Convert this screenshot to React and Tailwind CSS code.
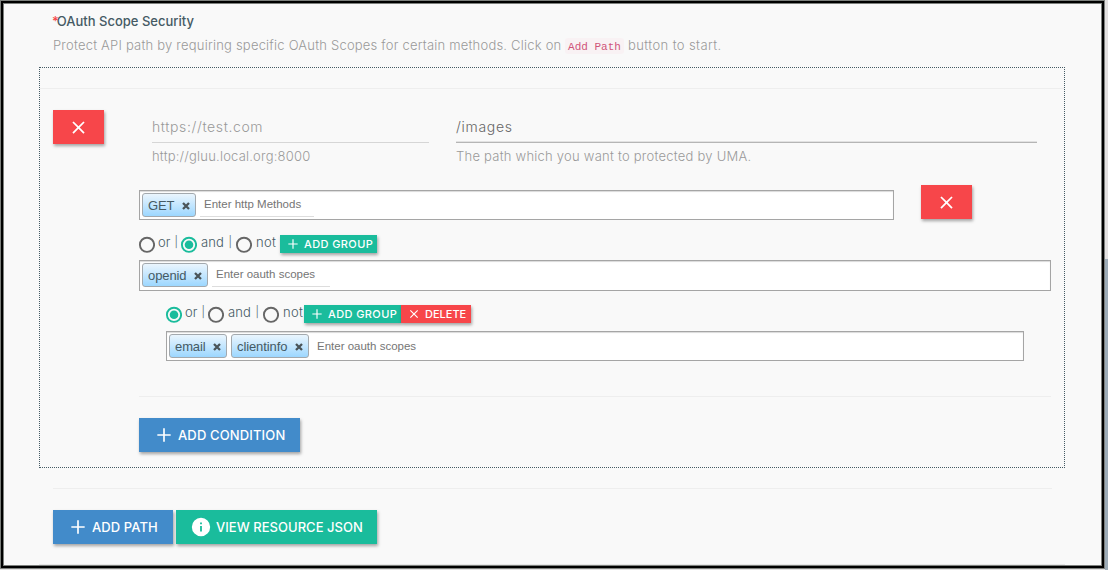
import React from "react";

const sans = "font-[Inter,'Liberation_Sans',sans-serif]";
const shadow = "shadow-[1px_2px_3px_rgba(0,0,0,0.35)]";

function Plus({ size = 20, className = "" }) {
  return (
    <svg width={size} height={size} viewBox="0 0 24 24" className={`shrink-0 ${className}`} fill="currentColor">
      <path d="M20 13h-7v7h-2v-7H4v-2h7V4h2v7h7z" />
    </svg>
  );
}

function Cross({ size = 20, className = "" }) {
  return (
    <svg width={size} height={size} viewBox="0 0 24 24" className={`shrink-0 ${className}`} fill="currentColor">
      <path d="M19 6.41 17.59 5 12 10.59 6.41 5 5 6.41 10.59 12 5 17.59 6.41 19 12 13.41 17.59 19 19 17.59 13.41 12z" />
    </svg>
  );
}

function Info() {
  return (
    <svg width="22" height="22" viewBox="0 0 24 24" className="-mt-px shrink-0" fill="currentColor">
      <path d="M12 2a10 10 0 1 0 0 20 10 10 0 0 0 0-20zm1 15h-2v-6h2v6zm0-8h-2V7h2v2z" />
    </svg>
  );
}

function RemoveButton() {
  return (
    <button className={`flex h-[34px] w-[51px] shrink-0 items-center justify-center bg-[#f7464a] text-white ${shadow}`}>
      <Cross size={21} />
    </button>
  );
}

function Tag({ label, width }) {
  return (
    <span
      className={`mr-1 flex h-6 shrink-0 items-center justify-between rounded-[3px] border border-[#a3a9ae] bg-linear-to-b from-[#eaf5fd] to-[#9cd7ff] pr-[5px] pl-[5px] font-['Liberation_Sans',sans-serif] text-[13px] leading-none tracking-[-0.1px] text-[#455a64] ${width}`}
    >
      {label}
      <svg width="8" height="8" viewBox="0 0 8 8" className="mt-[2px]" stroke="#4a5459" strokeWidth="2.3">
        <path d="M1 1l6 6M7 1l-6 6" />
      </svg>
    </span>
  );
}

function TagField({ tags, placeholder, className, inputClass }) {
  return (
    <div className={`flex items-start border border-[#a5a5a5] bg-white pt-[2px] pl-[2px] shadow-[inset_0_1px_1px_rgba(0,0,0,0.15)] ${className}`}>
      {tags.map((t) => (
        <Tag key={t.label} {...t} />
      ))}
      <span className={`flex h-6 items-center pt-px pl-[4px] font-['Liberation_Sans',sans-serif] text-[11.5px] text-[#757575] ${inputClass}`}>
        {placeholder}
      </span>
    </div>
  );
}

function Radio({ checked }) {
  return (
    <svg width="17" height="17" viewBox="0 0 17 17" className="mt-px -ml-px mr-px shrink-0">
      <circle cx="9" cy="8.8" r="7.1" fill="none" strokeWidth="1.9" stroke={checked ? "#1abc9c" : "#666"} />
      {checked && <circle cx="9" cy="8.8" r="4.3" fill="#1abc9c" />}
    </svg>
  );
}

function Operators({ selected, children, className }) {
  return (
    <div className={`flex h-[18px] items-start text-[13px] leading-[15px] font-[350] text-[#455a64] ${className}`}>
      <Radio checked={selected === "or"} />
      <span className="flex w-[25px] shrink-0 justify-between pr-[3px] pl-[2px]">
        or <span className="text-[11px]">|</span>
      </span>
      <Radio checked={selected === "and"} />
      <span className="flex w-[38px] shrink-0 justify-between pr-[4px] pl-[3px] tracking-[0.1px]">
        and <span className="text-[11px]">|</span>
      </span>
      <Radio checked={selected === "not"} />
      <span className="w-[27px] shrink-0 pl-[3px] tracking-[0.3px]">not</span>
      {children}
    </div>
  );
}

function SmallButton({ icon, label, className }) {
  return (
    <button className={`flex h-[18px] shrink-0 items-center pl-[6px] text-[11px] font-medium text-white ${shadow} ${className}`}>
      {icon}
      {label}
    </button>
  );
}

export default function App() {
  return (
    <div className={`flex h-[570px] w-[1108px] overflow-hidden bg-[#e3e1e1] ${sans}`}>
      <div className="h-[569px] w-[1105px] shrink-0 border border-[#7d807d]">
        <div className="flex h-[567px] w-[1103px] flex-col border-2 border-black bg-[#f9f9f9] pl-9 shadow-[inset_0_0_0_1px_#7d807d]">
          <h1 className="mt-[9px] ml-[12px] h-[18px] text-[13px] leading-[18px] font-medium text-[#455a64]">
            <span className="-mr-[2px] ml-px text-[#f7464a]">*</span>OAuth Scope Security
          </h1>
          <p className="mt-[6px] ml-[14px] flex h-[18px] items-center pt-[2px] text-[13px] font-light whitespace-pre text-[#999]">
            <span className="w-[512px] shrink-0 tracking-[0.21px]">
              Protect API path by requiring specific OAuth Scopes for certain methods. Click on{" "}
            </span>
            <code className="mr-[4px] flex h-4 w-[59px] shrink-0 items-center justify-center rounded-[3px] bg-[#f9f2f4] pt-[2px] font-['Liberation_Mono',monospace] text-[11px] text-[#d0547a]">
              Add Path
            </code>
            <span className="tracking-[0.4px]">button to start.</span>
          </p>

          <section className="mt-[13px] h-[401px] w-[1026px] shrink-0 border border-dotted border-[#455a64]">
            <div className="mt-5 h-px bg-[#eee]" />
            <div className="mt-[21px] ml-[13px] flex items-start">
              <RemoveButton />
              <div className="ml-12 h-[57px] w-[277px] text-[13px] font-light text-[#999]">
                <div className="flex h-[33px] items-center border-b border-[#d6d6d6] text-[14px] tracking-[0.6px]">https://test.com</div>
                <div className="pt-[4px] tracking-[0.2px]">http://gluu.local.org:8000</div>
              </div>
              <div className="ml-[27px] h-[57px] w-[581px] text-[13px] font-light text-[#999]">
                <div className="flex h-[33px] items-center border-b border-[#b5b5b5] text-[14px] font-[350] tracking-[0.7px] text-[#666] shadow-[inset_0_-1px_0_#e2e2e2]">
                  /images
                </div>
                <div className="pt-[4px] tracking-[0.24px]">The path which you want to protected by UMA.</div>
              </div>
            </div>

            <div className="mt-[18px] ml-[99px] flex items-start">
              <TagField
                className="mt-[5px] h-[30px] w-[755px]"
                tags={[{ label: "GET", width: "w-[54px]" }]}
                placeholder="Enter http Methods"
                inputClass="w-[114px] border-b border-[#ddd]"
              />
              <div className="ml-[27px]">
                <RemoveButton />
              </div>
            </div>

            <Operators selected="and" className="mt-[15px] ml-[99px]">
              <SmallButton className="w-[97px] bg-[#1abc9c] tracking-[0.4px]" icon={<Plus size={14} className="mr-1" />} label="ADD GROUP" />
            </Operators>
            <TagField
              className="mt-[7px] ml-[99px] h-[31px] w-[912px]"
              tags={[{ label: "openid", width: "w-[66px]" }]}
              placeholder="Enter oauth scopes"
              inputClass="w-[118px] border-b border-[#ddd]"
            />

            <Operators selected="or" className="mt-[14px] ml-[126px]">
              <SmallButton className="-ml-[3px] w-[97px] bg-[#1abc9c] tracking-[0.4px]" icon={<Plus size={14} className="mr-1" />} label="ADD GROUP" />
              <SmallButton className="w-[70px] bg-[#f7464a]" icon={<Cross size={14} className="mr-1" />} label="DELETE" />
            </Operators>
            <TagField
              className="mt-2 ml-[126px] h-[30px] w-[858px]"
              tags={[
                { label: "email", width: "w-[58px]" },
                { label: "clientinfo", width: "w-[78px]" },
              ]}
              placeholder="Enter oauth scopes"
              inputClass=""
            />

            <div className="mt-[35px] ml-[99px] h-px w-[912px] bg-[#eee]" />
            <button className={`mt-[21px] ml-[99px] flex h-[34px] w-[161px] items-center bg-[#428bca] pt-px pl-[15px] text-[13px] font-medium tracking-[0.14px] text-white ${shadow}`}>
              <Plus className="-mt-px mr-1" />
              ADD CONDITION
            </button>
          </section>

          <div className="mt-5 ml-[14px] h-px w-[999px] shrink-0 bg-[#eee]" />
          <div className="mt-[21px] ml-[14px] flex gap-[3px] text-[13px] font-medium text-white">
            <button className={`flex h-[34px] w-[120px] items-center bg-[#428bca] pt-px pl-[15px] tracking-[0.1px] ${shadow}`}>
              <Plus className="-mt-px mr-1" />
              ADD PATH
            </button>
            <button className={`flex h-[34px] w-[201px] items-center bg-[#1abc9c] pt-px pl-[14px] ${shadow}`}>
              <Info />
              <span className="ml-1 tracking-[0.03px]">VIEW RESOURCE JSON</span>
            </button>
          </div>
          <div className="mt-5 h-px w-[1026px] shrink-0 bg-[#e6e6e6]" />
        </div>
      </div>
      <div className="flex w-[3px] flex-col justify-end">
        <div className="h-[311px] bg-[#9dacb8]" />
      </div>
    </div>
  );
}
